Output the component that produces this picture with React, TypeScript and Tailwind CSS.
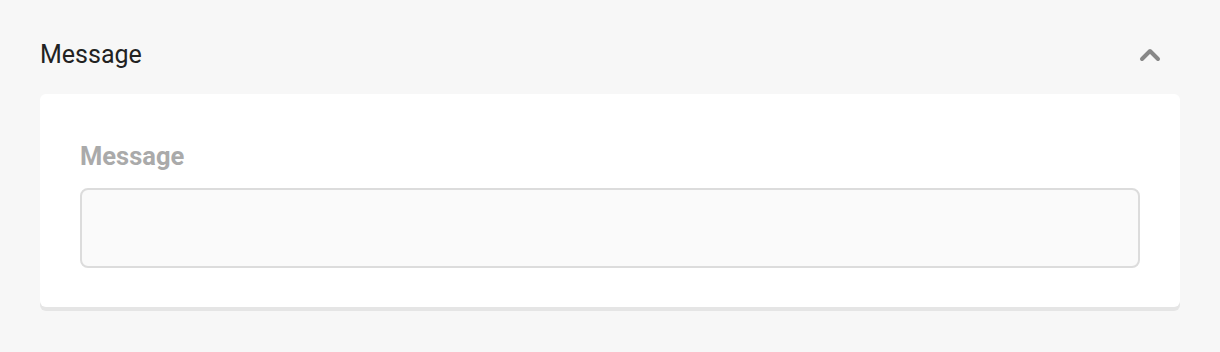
export default function App() {
  return (
    <div className="min-h-[352px] w-full bg-[#f7f7f7] px-10 pt-[37px] font-['Roboto',sans-serif]">
      <div className="flex items-center justify-between">
        <h2 className="text-[25px] leading-[36px] text-[#222]">Message</h2>
        <button className="mr-[18px] flex h-6 w-6 items-center justify-center text-[#888]">
          <svg width="22" height="14" viewBox="0 0 22 14" fill="none" stroke="currentColor" strokeWidth="4" strokeLinecap="round" strokeLinejoin="round">
            <path d="M3 11 L11 3 L19 11" />
          </svg>
        </button>
      </div>
      <div className="mt-[21px] rounded-md bg-white px-10 pb-[39px] pt-[48px] shadow-[0_4px_0_#e5e5e5]">
        <label className="block text-[25.5px] font-bold leading-[28px] text-[#aaaaaa]">Message</label>
        <div className="mt-[18px] h-[80px] rounded-lg border-2 border-[#dcdcdc] bg-[#fafafa]" />
      </div>
    </div>
  )
}
